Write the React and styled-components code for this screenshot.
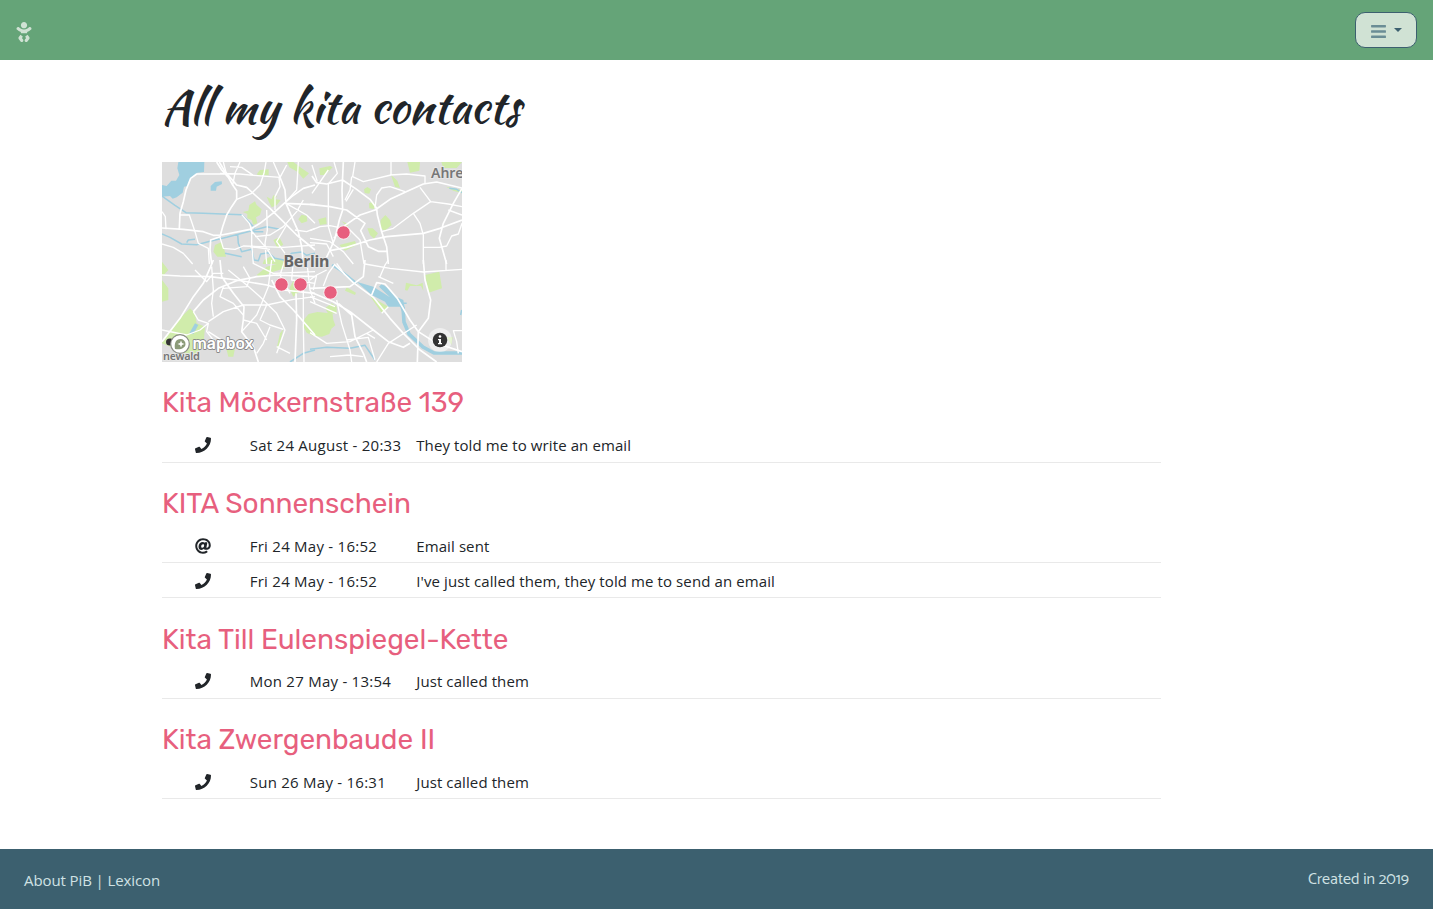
import React from 'react';
import styled, { createGlobalStyle } from 'styled-components';
import { FaBaby, FaBars, FaPhone, FaAt } from 'react-icons/fa';

const GlobalStyle = createGlobalStyle`
  *, *::before, *::after { box-sizing: border-box; }
  body {
    margin: 0;
    background: #fff;
    color: #212529;
    font-family: "Segoe UI", "Open Sans", "Noto Sans", sans-serif;
    font-size: 15px;
    line-height: 24px;
  }
`;

const Page = styled.div`
  min-height: 909px;
  display: flex;
  flex-direction: column;
`;

const Navbar = styled.header`
  height: 60px;
  padding: 0 16px;
  display: flex;
  align-items: center;
  justify-content: space-between;
  background: #65a478;
`;

const Brand = styled.a`
  display: flex;
  color: #d0e2d4;
  margin-top: 3px;
  margin-left: -2.5px;
`;

const MenuButton = styled.button`
  width: 62px;
  height: 36px;
  padding: 2px 1px 0 0;
  display: flex;
  align-items: center;
  justify-content: center;
  gap: 7px;
  border: 1px solid #3c606f;
  border-radius: 10px;
  background: #d0e2d4;
  color: #6a8d95;
`;

const Caret = styled.span`
  border: 4px solid transparent;
  border-top-color: #3c606f;
  border-bottom: 0;
  margin-top: -3px;
`;

const Main = styled.main`
  flex: 1;
  width: 999px;
  margin-left: 162px;
`;

const Title = styled.h1`
  margin: 18px 0 26px;
  height: 58px;
  font-family: "Kaushan Script", cursive;
  font-size: 45.2px;
  font-weight: 500;
  line-height: 58px;
  white-space: nowrap;
`;

const MapFrame = styled.div`
  width: 300px;
  height: 200px;
  overflow: hidden;
  background: #dedede;
  svg { display: block; }
`;

const Section = styled.section`
  margin-top: 24px;
`;

const KitaName = styled.h3`
  margin: 0 0 8px;
  padding-top: 0.42px;
  height: 33.6px;
  color: #e75f7e;
  font-family: Rubik, Roboto, sans-serif;
  font-size: 28px;
  font-weight: 400;
  line-height: 33.6px;
  letter-spacing: -0.05px;
  white-space: nowrap;
`;

const Row = styled.div`
  height: 35px;
  display: grid;
  grid-template-columns: 1fr 2fr 9fr;
  align-items: center;
  padding-top: 0.8px;
  border-bottom: 1px solid #e9e9e9;
`;

const IconCell = styled.div`
  display: flex;
  justify-content: center;
  padding-right: 1px;
`;

const Cell = styled.div`
  padding-left: 4.5px;
  letter-spacing: ${(p) => p.$track || 0}px;
  white-space: nowrap;
`;

const Footer = styled.footer`
  height: 60px;
  padding: 0 24px;
  display: flex;
  align-items: center;
  justify-content: space-between;
  background: #3c606f;
  color: #d0e2e4;
`;

const FooterLinks = styled.nav`
  padding-top: 1px;
  letter-spacing: -0.1px;
`;

const Credit = styled.div`
  padding-top: 2px;
  font-family: Catamaran, Lato, sans-serif;
  font-size: 16px;
`;

const ROAD = '#ffffff';
const WATER = '#a0cfe0';
const PARK = '#d0ecab';

const tiles = [
  {
    at: 'translate(-2 -2)',
    parks: 'M248,156L265,152 268,135 285,124 290,135 305,148 300,165 288,172 292,190 280,194 275,180 262,175 262,162ZM320,110L335,118 340,106 350,108 346,118 362,120 350,136 335,142 328,128ZM292,40L300,30 326,28 326,46 292,46ZM382,6L400,6 425,25 447,40 430,56 412,35 388,22ZM415,178L425,164 440,168 442,184 425,190ZM340,240L358,232 370,254 352,264ZM165,255L185,246 192,265 198,290 172,290 160,275ZM312,300L330,290 372,302 370,312 308,312Z',
    lakes: 'M55,6L133,6 132,36 112,38 100,50 88,62 85,78 72,80 68,98 50,112 38,116 30,108 6,110 6,75 20,78 34,62 48,62 58,45 52,25ZM152,78L165,66 185,64 186,72 170,80 168,92 152,92Z',
    rivers: 'M6,108L45,136 78,158 130,160 245,164 265,184 285,205M6,222L30,232 65,252 110,254 150,244 200,232 275,212 320,200 360,208M80,248L85,240 105,238M233,222L235,250 245,275 275,268 282,300 295,302 302,282 325,278 345,295 372,300 395,280 425,276 440,286 465,280M195,280L245,290M280,215L310,215',
    roads: 'M205,42L110,42 92,55 78,90 70,125 60,160 58,205M170,6L185,30 205,52 218,75 230,92 230,118 215,140 200,165 188,200 180,230 152,240 150,270 155,312M178,6L195,35 230,75 260,82 285,105 330,145 375,190 410,225 465,270M6,204L70,208 130,215 160,226 185,225 270,208 300,190 345,155 395,110 430,85 465,75M360,52L375,90 378,130 395,170 415,215 425,260 430,312M375,130L465,134',
    lanes: 'M180,40L240,42 280,46 360,52M230,118L275,100 300,75 312,40 318,6M6,155L16,170 18,208M6,252L40,262 70,280 98,312M58,165L88,165 105,215 115,250 145,265 148,312M245,164L268,190 275,210 275,250 280,312M270,208L320,265 345,305M320,150L322,210 315,250 320,312M285,230L330,225 370,200 410,155 430,120M415,6L410,90 378,125M180,232L190,265 225,268 250,258 370,262 465,255M240,6L225,40 218,75M345,150L345,110 360,80 357,52M210,20L245,22 280,46M340,6L360,52 380,15M378,130L440,165 465,190M190,6L200,45M405,210L440,215 465,205M380,195L350,245 375,280M270,260L330,268',
  },
  {
    at: 'translate(148 -2)',
    parks: 'M28,25L60,18 68,22 45,45 30,45ZM292,6L330,6 328,32 300,38ZM243,45L262,62 270,84 255,80ZM162,88L172,81 183,88 178,101 164,99ZM177,130L187,125 198,134 192,147 178,145ZM25,178L48,172 50,192 30,195ZM172,205L188,205 204,220 192,236 180,225ZM212,180L226,165 240,180 245,195 225,212 210,205ZM88,255L135,243 140,255 105,272ZM394,6L456,6 440,24 400,24ZM408,80L456,90 456,100 430,92ZM94,183L115,193 112,200Z',
    lakes: '',
    rivers: 'M418,85L440,88 456,98',
    roads: 'M100,6L96,90 98,150 88,180 75,235 60,270 40,312M6,48L20,68 50,72 98,60 140,88 180,118 200,145 202,165 215,215 230,260 235,312M0,133L60,140 110,150 165,190 152,212 175,260 205,274 232,274M72,235L100,200 150,165 195,150 240,118 300,90 340,72 380,66 456,84M60,272L110,262 180,240 230,230 340,220 390,205 456,180M456,85L430,130 400,190 388,235 410,312',
    lanes: 'M125,50L120,90 105,120M135,6L128,50 160,65 243,45 243,6M240,45L290,42 345,48 345,70M195,145L200,105 215,84 240,80 285,95M215,215L250,205 310,160 362,125 330,82M310,160L330,190 340,225 340,312M362,125L415,132 456,140M340,262L388,262 410,258 425,228 445,222 456,190M72,6L82,40 55,72 55,200 70,250M0,212L30,200 60,197 100,205M110,200L150,240 162,312M0,235L60,245 100,275 130,312M6,15L22,65M415,150L456,165M6,100L55,30M130,88L108,124M0,248L50,252 70,290',
  },
  {
    at: 'translate(-2 98)',
    parks: 'M6,5L25,30 6,50ZM6,60L25,85 25,120 6,125ZM6,246L60,175 90,145 105,160 110,190 135,200 130,260 100,290 6,250ZM290,45L320,20 375,5 375,25 340,35 300,52ZM388,85L400,62 418,95 400,110ZM370,208L355,265 350,265 360,220ZM200,270L225,265 220,290 205,290Z',
    lakes: 'M88,220L105,190 115,195 100,222Z',
    rivers: 'M390,306L430,280 465,270',
    roads: 'M6,245L60,175 100,110 130,70 152,20 160,0M6,45L60,48 150,50 230,60 320,75 370,90 465,100M100,155L130,120 175,85 230,62 290,50 350,45 465,50M180,0L185,50 220,100 252,140 250,180 245,215 280,260 295,306M408,100L410,180 405,306M335,60L360,110 400,150 465,225',
    lanes: 'M100,155L115,180 145,190 140,215 160,240M145,185L190,155 250,135 320,135 400,118 465,110M155,20L160,90 155,130 160,170M245,215L290,165 305,130 325,80 335,0M190,80L180,110 220,130 250,165M320,135L300,180 330,195 370,208M330,200L310,250 290,280M430,60L430,200 432,306M6,210L80,225 120,210 145,190M145,215L200,250 240,265M205,30L260,75 300,110 350,160 375,210 350,280M400,0L395,60 465,70M105,30L140,65 160,40 190,40M250,20L270,55 260,80 190,85M280,10L340,40 465,35M375,0L360,45 390,100M250,180L290,190 320,240M440,0L450,90 465,130M350,260L390,280',
  },
  {
    at: 'translate(148 98)',
    parks: 'M-16,176L-4,162 22,156 46,158 68,162 70,180 76,196 64,206 58,222 36,230 10,228 -10,218 -22,196ZM45,145L65,130 80,140 80,160 55,162ZM345,45L388,35 396,85 356,98ZM110,82L138,98 135,105 105,92ZM180,108L235,140 215,158 195,130ZM410,232L428,232 424,254ZM285,90L288,68 320,76 338,68 340,92 333,78 300,78 292,92Z',
    lakes: 'M140,65L190,80 240,112 207,80 215,72 240,88 262,112 280,120 286,155 278,160 270,140 235,140 225,125 185,105Z',
    rivers: 'M68,14L90,30 140,70M0,268L50,262 120,265 165,256 195,300M280,130L290,130M455,150L452,165',
    roads: 'M75,15L130,68 190,112 240,175 280,220 330,270 380,306M0,95L70,125 120,155 190,210 235,245 280,262 300,250M0,85L120,80 160,50 165,0M185,105L200,68 225,72 262,115 300,180 325,215 380,250 456,275M340,0L345,60 362,120 355,175 325,215 322,306M85,130L125,165 135,230 160,280 170,306',
    lanes: 'M0,125L80,160M80,120L95,190 120,270 125,306M0,218L50,250 120,245 190,210M60,290L120,285 160,290M210,50L225,15 235,0M205,50L250,70M165,12L240,25 340,36 456,28M408,0L408,30M456,212L430,212 440,245 445,280M200,306L235,250 320,195M40,78L55,40 75,12M10,90L20,45 50,30M235,140L215,160M80,10L105,45M0,110L75,140M0,60L20,45M110,240L175,232 195,300M170,220L195,235',
  },
];

const pins = [[181.5, 70.5], [119.5, 122.5], [138.5, 122.5], [168.5, 130.5]];

function BerlinMap() {
  return (
    <MapFrame>
      <svg width="300" height="200" viewBox="0 0 300 200" fontFamily="Noto Sans, Open Sans, sans-serif">
        {tiles.map((t) => (
          <g key={t.at} transform={`${t.at} scale(.33333)`} fill="none" strokeLinejoin="round">
            <path d={t.parks} fill={PARK} />
            <path d={t.lakes} fill={WATER} />
            <path d={t.rivers} stroke={WATER} strokeWidth="4.5" />
          </g>
        ))}
        <path d="M170 103L178 108 194 121" stroke={WATER} strokeWidth="2.5" fill="none" />
        <path d="M241 145L242 160 247 172 261 185 272 191 300 191" stroke={WATER} strokeWidth="3.6" fill="none" />
        {tiles.map((t) => (
          <g key={t.at} transform={`${t.at} scale(.33333)`} fill="none" stroke={ROAD} strokeLinejoin="round">
            <path d={t.roads} strokeWidth="5" />
            <path d={t.lanes} strokeWidth="4" />
          </g>
        ))}
        <g fill="#666" stroke="#e6e6e6" strokeWidth="2" paintOrder="stroke" fontWeight="600">
          <text x="121.5" y="104.5" fontSize="16" fontWeight="700" textLength="46">Berlin</text>
          <text x="269" y="15.5" fontSize="14" fill="#777">Ahre</text>
          <text x="1" y="198" fontSize="11" textLength="37" fill="#777">newald</text>
        </g>
        {pins.map(([x, y]) => (
          <circle key={`${x}-${y}`} cx={x} cy={y} r="6.7" fill="#e75f7e" stroke="#fff" strokeWidth=".8" />
        ))}
        <ellipse cx="8" cy="180" rx="4" ry="3.5" fill="#333" />
        <circle cx="18" cy="182" r="9.3" fill="#fff" stroke="#8b8d86" strokeWidth="1.2" />
        <path d="M13 187C12 181 14 177 18.5 177A5 5 0 0 1 23.5 182C23.500 186 19 188 13 187Z" fill="#8b9a78" />
        <path d="M19 178.500L20 181 22.500 182 20 183 19 185.500 18 183 15.500 182 18 181Z" fill="#fff" />
        <text x="30.500" y="187" fontFamily="Rubik, sans-serif" fontSize="16" fontWeight="500" textLength="61" lengthAdjust="spacingAndGlyphs" fill="#fff" stroke="#888" strokeWidth="1.8" paintOrder="stroke">mapbox</text>
        <circle cx="278" cy="178" r="12" fill="#fff" fillOpacity=".5" />
        <circle cx="278" cy="178" r="7.3" fill="#333" />
        <circle cx="278" cy="174.500" r="1.3" fill="#fff" />
        <path d="M276 177H279V181H280V182.300H276V181H277V178.300H276Z" fill="#fff" />
      </svg>
    </MapFrame>
  );
}

const kitas = [
  { name: 'Kita Möckernstraße 139', contacts: [
    { icon: FaPhone, date: 'Sat 24 August - 20:33', note: 'They told me to write an email' },
  ] },
  { name: 'KITA Sonnenschein', contacts: [
    { icon: FaAt, date: 'Fri 24 May - 16:52', note: 'Email sent' },
    { icon: FaPhone, date: 'Fri 24 May - 16:52', note: "I've just called them, they told me to send an email" },
  ] },
  { name: 'Kita Till Eulenspiegel-Kette', contacts: [
    { icon: FaPhone, date: 'Mon 27 May - 13:54', note: 'Just called them' },
  ] },
  { name: 'Kita Zwergenbaude II', contacts: [
    { icon: FaPhone, date: 'Sun 26 May - 16:31', note: 'Just called them' },
  ] },
];

export default function App() {
  return (
    <Page>
      <GlobalStyle />
      <Navbar>
        <Brand><FaBaby size={20} /></Brand>
        <MenuButton><FaBars size={17} /><Caret /></MenuButton>
      </Navbar>
      <Main>
        <Title>All my kita contacts</Title>
        <BerlinMap />
        {kitas.map((kita) => (
          <Section key={kita.name}>
            <KitaName>{kita.name}</KitaName>
            {kita.contacts.map(({ icon: Icon, date, note }) => (
              <Row key={note}>
                <IconCell><Icon size={16} /></IconCell>
                <Cell $track={0.25}>{date}</Cell>
                <Cell $track={0.1}>{note}</Cell>
              </Row>
            ))}
          </Section>
        ))}
      </Main>
      <Footer>
        <FooterLinks>About PiB | Lexicon</FooterLinks>
        <Credit>Created in 2019</Credit>
      </Footer>
    </Page>
  );
}
